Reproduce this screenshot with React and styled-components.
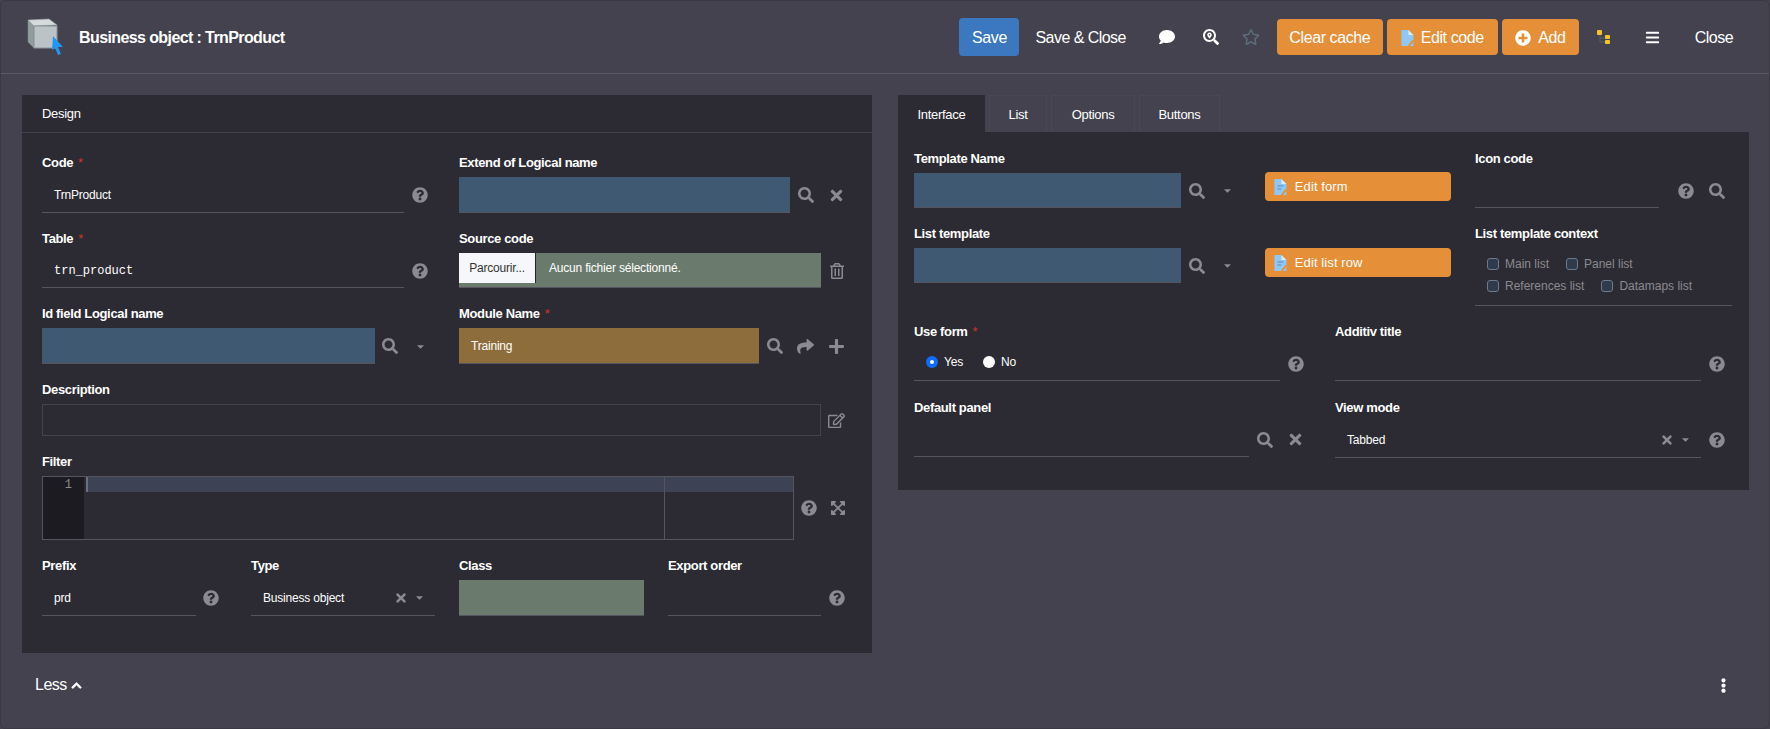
import React from 'react'
import styled, { createGlobalStyle } from 'styled-components'
import {
  FaSearch, FaTimes, FaQuestionCircle, FaRegTrashAlt, FaShare, FaPlus, FaRegEdit,
  FaExpandArrowsAlt, FaCaretDown, FaChevronUp, FaComment, FaSearchLocation, FaRegStar,
  FaPlusCircle, FaBars, FaEllipsisV,
} from 'react-icons/fa'

const Global = createGlobalStyle`
  html, body { margin: 0; padding: 0; background: #43424e; }
  *, *::before { box-sizing: border-box; }
  body { font-family: "Liberation Sans", Arial, sans-serif; color: #fff; }
`

const Page = styled.div`
  width: 1770px;
  height: 729px;
  overflow: hidden;
  background: #43424e;
  border: 1px solid #3a3944;
  border-radius: 6px;
`

const Header = styled.header`
  height: 73px;
  display: flex;
  align-items: center;
  border-bottom: 1px solid #5a5965;
  padding: 0 36px 0 26px;
`

const Title = styled.h1`
  flex: 1;
  margin: 2px 0 0 14px;
  font-size: 16px;
  font-weight: 700;
  letter-spacing: -0.6px;
`

const Toolbar = styled.div`
  display: flex;
  align-items: center;
`

const SaveButton = styled.button`
  height: 38px;
  width: 60px;
  padding: 2px 0 0;
  border: 0;
  border-radius: 4px;
  background: #3b78c0;
  color: #fff;
  font: 16px "Liberation Sans", Arial, sans-serif;
  letter-spacing: -0.4px;
  margin-right: 16px;
`

const TextButton = styled.span`
  font-size: 16px;
  letter-spacing: -0.55px;
  padding-top: 2px;
  margin: ${p => p.$margin || '0'};
`

const ToolIcon = styled.span`
  display: flex;
  justify-content: center;
  width: ${p => p.$w || 44}px;
  margin: ${p => p.$margin || '0'};
  font-size: ${p => p.$size || 16}px;
  color: ${p => p.$color || '#fff'};
`

const OrangeButton = styled.button`
  display: flex;
  align-items: center;
  justify-content: ${p => (p.$wide ? 'flex-start' : 'center')};
  gap: ${p => (p.$wide ? 8 : 7)}px;
  width: ${p => p.$w}px;
  height: ${p => (p.$wide ? 29 : 36)}px;
  margin: ${p => p.$margin || '0'};
  padding: ${p => (p.$wide ? '0 0 0 9px' : '2px 0 0')};
  border: 0;
  border-radius: 4px;
  background: #e59038;
  color: #fff;
  font: ${p => (p.$wide ? 13 : 16)}px "Liberation Sans", Arial, sans-serif;
  letter-spacing: ${p => (p.$wide ? '0.1px' : '-0.4px')};
`

const Main = styled.main`
  display: flex;
  align-items: flex-start;
  gap: 26px;
  padding: 21px 0 0 21px;
`

const Panel = styled.section`
  width: 850px;
  height: 558px;
  background: #2c2b33;
`

const PanelHead = styled.div`
  height: 38px;
  display: flex;
  align-items: center;
  padding-left: 20px;
  font-size: 13px;
  letter-spacing: -0.3px;
  border-bottom: 1px solid #42414c;
`

const Field = styled.div`
  min-width: 0;
  width: ${p => (p.$w ? `${p.$w}px` : 'auto')};
`

const Label = styled.label`
  display: block;
  height: 16px;
  line-height: 16px;
  margin-bottom: ${p => p.$gap ?? 7}px;
  font-size: 13px;
  font-weight: 700;
  letter-spacing: -0.35px;
  white-space: nowrap;

  em {
    margin-left: 5px;
    color: #d0342c;
    font-style: normal;
    font-weight: 400;
  }
`

const PanelBody = styled.div`
  display: flex;
  flex-direction: column;
  gap: 17px;
  padding: 21px 20px 0;

  ${Label} { line-height: 18px; }
`

const TwoCols = styled.div`
  display: grid;
  grid-template-columns: 393px 393px;
  column-gap: 24px;
`

const BottomRow = styled.div`
  display: grid;
  grid-template-columns: 209px 208px 209px 185px;
`

const Control = styled.div`
  display: flex;
  align-items: center;
  height: ${p => p.$h || 36}px;
`

const Input = styled.div`
  flex: 1;
  min-width: 0;
  align-self: stretch;
  display: flex;
  align-items: center;
  margin-right: ${p => p.$mr || 0}px;
  padding-left: ${p => p.$pl ?? 12}px;
  padding-top: ${p => (p.$mono ? 2 : 0)}px;
  font-family: ${p => (p.$mono ? '"Liberation Mono", monospace' : 'inherit')};
  font-size: 12px;
  letter-spacing: ${p => (p.$mono ? '0' : '-0.2px')};
  background: ${p => p.$bg || 'transparent'};
  border-bottom: 1px solid #55545f;
`

const Slot = styled.span`
  flex: none;
  width: ${p => p.$w || 31}px;
  display: flex;
  justify-content: center;
  align-items: center;
  font-size: ${p => p.$size || 16}px;
  color: #8b8a90;
`

const Caret = styled.span`
  display: flex;
  font-size: 11px;
  color: #8b8a90;
  margin: 0 ${p => p.$mr || 0}px 0 6px;
`

const ClearMark = styled.span`
  display: flex;
  font-size: 14px;
  color: #8b8a90;
`

const SelectValue = styled.span`
  flex: 1;
`

const FileButton = styled.span`
  align-self: flex-start;
  width: 77px;
  height: 30px;
  display: flex;
  align-items: center;
  justify-content: center;
  border-right: 1px solid #24232a;
  background: #f6f7fa;
  color: #333;
  font-size: 12px;
`

const FileName = styled.span`
  margin: 0 0 4px 13px;
  font-size: 12px;
`

const Description = styled.div`
  flex: 1;
  align-self: stretch;
  border: 1px solid #42414c;
`

const Editor = styled.div`
  flex: 1;
  align-self: stretch;
  display: flex;
  border: 1px solid #55545f;
`

const Gutter = styled.div`
  width: 41px;
  background: #1c1b21;
  color: #8b8a90;
  font: 12px/16px "Liberation Mono", monospace;
  text-align: right;
  padding-right: 12px;
`

const EditorLines = styled.div`
  position: relative;
  flex: 1;
`

const ActiveLine = styled.div`
  height: 15px;
  background: #3d4354;
  border-left: 2px solid #6a7080;
  margin-left: 2px;
`

const PrintMargin = styled.div`
  position: absolute;
  top: 0;
  bottom: 0;
  left: 580px;
  width: 1px;
  background: #55545f;
`

const LessRow = styled.div`
  display: flex;
  align-items: center;
  justify-content: space-between;
  padding: 23px 34px 0 34px;
  font-size: 16px;
`

const Less = styled.span`
  display: flex;
  align-items: center;
  gap: 4px;
  letter-spacing: -0.5px;

  svg {
    font-size: 11px;
    stroke: currentColor;
    stroke-width: 40px;
  }
`

const Kebab = styled.span`
  display: flex;
  font-size: 15px;
  margin-right: 4px;
`

const RightColumn = styled.div`
  width: 851px;
`

const Tabs = styled.nav`
  display: flex;
  gap: 4px;
  height: 37px;
`

const Tab = styled.span`
  display: flex;
  align-items: center;
  justify-content: center;
  width: ${p => p.$w}px;
  font-size: 13px;
  letter-spacing: -0.3px;
  background: ${p => (p.$active ? '#2c2b33' : 'transparent')};
  border: 1px solid ${p => (p.$active ? '#2c2b33' : '#484753')};
  border-bottom: 0;
`

const RightPanel = styled.section`
  height: 358px;
  padding: 19px 17px 0 16px;
  background: #2c2b33;
`

const TopGrid = styled.div`
  display: grid;
  grid-template-columns: 328px 187px 257px;
  column-gap: 23px;
  row-gap: 18px;
  margin-bottom: 18px;
`

const LowerGrid = styled.div`
  display: grid;
  grid-template-columns: 397px 397px;
  column-gap: 24px;
  row-gap: 19px;
`

const Context = styled.div`
  height: 58px;
  padding: 5px 0 0 12px;
  border-bottom: 1px solid #55545f;
`

const CheckRow = styled.div`
  display: flex;
  align-items: center;
  gap: 17px;
  height: 22px;
`

const Check = styled.span`
  display: flex;
  align-items: center;
  gap: 6px;
  font-size: 12px;
  color: #8b8a90;

  &::before {
    content: "";
    width: 12px;
    height: 12px;
    border: 1px solid #6d7a8c;
    border-radius: 3px;
    background: #2f3a4d;
  }
`

const Radios = styled.div`
  display: flex;
  align-items: center;
  gap: 20px;
  height: 100%;
  padding-bottom: 2px;
  padding-left: 12px;
`

const Radio = styled.span`
  display: flex;
  align-items: center;
  gap: 6px;
  font-size: 12px;

  &::before {
    content: "";
    width: 12px;
    height: 12px;
    border-radius: 50%;
    background: #fff;
    border: ${p => (p.$on ? '4px solid #0d6efd' : '0')};
  }
`

const Help = () => <Slot><FaQuestionCircle /></Slot>
const Search = () => <Slot><FaSearch /></Slot>
const Clear = () => <Slot $size={17}><FaTimes /></Slot>
const Drop = () => <Slot $w={30}><FaCaretDown style={{ fontSize: 11 }} /></Slot>

const Logo = () => (
  <svg width="38" height="38" viewBox="0 0 38 38">
    <polygon points="1,2 7,8 7,30 1,24" fill="#8f9d9d" stroke="#7d8a8c" strokeWidth="0.6" />
    <polygon points="1,2 22,1 30,7 7,8" fill="#d5dadb" stroke="#9aa3a6" strokeWidth="0.6" />
    <rect x="7" y="8" width="23" height="22" fill="#bcc3c7" stroke="#8b9498" strokeWidth="1" />
    <polygon points="26,18 36,29 31,29 34,36 31,37 28,30 25,32" fill="#2196f3" />
  </svg>
)

const FileIcon = ({ size = 16, lines = true }) => (
  <svg width={size * 0.8} height={size} viewBox="0 0 12 16">
    <path d="M0 0h7l5 5v11H0z" fill="#8fc8f5" />
    <path d="M7 0l5 5H7z" fill="#d8ecfb" />
    {lines && <path d="M3 7h6M3 10h4" stroke="#4d90c8" strokeWidth="1" />}
    <path d="M7 15l4-5 1.5 1-4 5H7z" fill="#e8902a" />
  </svg>
)

const TreeIcon = () => (
  <svg width="16" height="16" viewBox="0 0 16 16">
    <path d="M4 6v7h5M4 9h5" stroke="#55606a" strokeWidth="1" fill="none" />
    <rect x="1" y="1" width="5" height="5" rx="1" fill="#f5c325" />
    <rect x="9" y="6" width="5" height="4" rx="1" fill="#f5c325" />
    <rect x="9" y="11" width="5" height="4" rx="1" fill="#f5c325" />
  </svg>
)

export default function App() {
  return (
    <Page>
      <Global />
      <Header>
        <Logo />
        <Title>Business object : TrnProduct</Title>
        <Toolbar>
          <SaveButton>Save</SaveButton>
          <TextButton $margin="0 19px 0 0">Save &amp; Close</TextButton>
          <ToolIcon><FaComment /></ToolIcon>
          <ToolIcon><FaSearchLocation /></ToolIcon>
          <ToolIcon $w={36} $size={18} $color="#5d6b7c"><FaRegStar /></ToolIcon>
          <OrangeButton $w={106} $margin="0 4px 0 8px">Clear cache</OrangeButton>
          <OrangeButton $w={111} $margin="0 4px 0 0"><FileIcon size={16} lines={false} />Edit code</OrangeButton>
          <OrangeButton $w={77}><FaPlusCircle />Add</OrangeButton>
          <ToolIcon $margin="0 0 0 3px"><TreeIcon /></ToolIcon>
          <ToolIcon $size={15} $margin="0 0 0 5px"><FaBars /></ToolIcon>
          <TextButton $margin="0 0 0 20px">Close</TextButton>
        </Toolbar>
      </Header>

      <Main>
        <Panel>
          <PanelHead>Design</PanelHead>
          <PanelBody>
            <TwoCols>
              <Field>
                <Label>Code<em>*</em></Label>
                <Control><Input>TrnProduct</Input><Help /></Control>
              </Field>
              <Field>
                <Label>Extend of Logical name</Label>
                <Control><Input $bg="#3f5973" /><Search /><Clear /></Control>
              </Field>
            </TwoCols>
            <TwoCols>
              <Field>
                <Label>Table<em>*</em></Label>
                <Control $h={35}><Input $mono>trn_product</Input><Help /></Control>
              </Field>
              <Field>
                <Label>Source code</Label>
                <Control $h={35}>
                  <Input $bg="#6a7b6d" $pl={0}>
                    <FileButton>Parcourir...</FileButton>
                    <FileName>Aucun fichier sélectionné.</FileName>
                  </Input>
                  <Slot><FaRegTrashAlt /></Slot>
                </Control>
              </Field>
            </TwoCols>
            <TwoCols>
              <Field>
                <Label>Id field Logical name</Label>
                <Control><Input $bg="#3f5973" /><Slot $w={30}><FaSearch /></Slot><Drop /></Control>
              </Field>
              <Field>
                <Label>Module Name<em>*</em></Label>
                <Control>
                  <Input $bg="#8c6d3b">Training</Input>
                  <Search />
                  <Slot $size={17}><FaShare /></Slot>
                  <Slot $size={17}><FaPlus /></Slot>
                </Control>
              </Field>
            </TwoCols>
            <Field>
              <Label>Description</Label>
              <Control $h={32}><Description /><Slot $size={17}><FaRegEdit /></Slot></Control>
            </Field>
            <Field>
              <Label>Filter</Label>
              <Control $h={64}>
                <Editor>
                  <Gutter>1</Gutter>
                  <EditorLines><ActiveLine /><PrintMargin /></EditorLines>
                </Editor>
                <Slot $w={29}><FaQuestionCircle /></Slot>
                <Slot $w={29}><FaExpandArrowsAlt /></Slot>
              </Control>
            </Field>
            <BottomRow>
              <Field $w={184}>
                <Label>Prefix</Label>
                <Control><Input>prd</Input><Slot $w={30}><FaQuestionCircle /></Slot></Control>
              </Field>
              <Field $w={184}>
                <Label>Type</Label>
                <Control>
                  <Input>
                    <SelectValue>Business object</SelectValue>
                    <ClearMark><FaTimes /></ClearMark>
                    <Caret $mr={10}><FaCaretDown /></Caret>
                  </Input>
                </Control>
              </Field>
              <Field $w={185}>
                <Label>Class</Label>
                <Control><Input $bg="#6a7b6d" /></Control>
              </Field>
              <Field $w={184}>
                <Label>Export order</Label>
                <Control><Input /><Help /></Control>
              </Field>
            </BottomRow>
          </PanelBody>
        </Panel>

        <RightColumn>
          <Tabs>
            <Tab $w={87} $active>Interface</Tab>
            <Tab $w={58}>List</Tab>
            <Tab $w={84}>Options</Tab>
            <Tab $w={81}>Buttons</Tab>
          </Tabs>
          <RightPanel>
            <TopGrid>
              <Field>
                <Label $gap={6}>Template Name</Label>
                <Control $h={35}><Input $bg="#3f5973" /><Search /><Drop /></Control>
              </Field>
              <OrangeButton $wide $w={186} $margin="21px 0 0"><FileIcon />Edit form</OrangeButton>
              <Field>
                <Label $gap={6}>Icon code</Label>
                <Control $h={35}><Input $mr={11} /><Help /><Search /></Control>
              </Field>
              <Field>
                <Label $gap={6}>List template</Label>
                <Control $h={35}><Input $bg="#3f5973" /><Search /><Drop /></Control>
              </Field>
              <OrangeButton $wide $w={186} $margin="22px 0 0"><FileIcon />Edit list row</OrangeButton>
              <Field>
                <Label $gap={6}>List template context</Label>
                <Context>
                  <CheckRow><Check>Main list</Check><Check>Panel list</Check></CheckRow>
                  <CheckRow><Check>References list</Check><Check>Datamaps list</Check></CheckRow>
                </Context>
              </Field>
            </TopGrid>
            <LowerGrid>
              <Field>
                <Label $gap={6}>Use form<em>*</em></Label>
                <Control $h={35}>
                  <Input $pl={0}>
                    <Radios><Radio $on>Yes</Radio><Radio>No</Radio></Radios>
                  </Input>
                  <Help />
                </Control>
              </Field>
              <Field>
                <Label $gap={6}>Additiv title</Label>
                <Control $h={35}><Input /><Help /></Control>
              </Field>
              <Field>
                <Label $gap={6}>Default panel</Label>
                <Control $h={35}><Input /><Search /><Clear /></Control>
              </Field>
              <Field>
                <Label $gap={6}>View mode</Label>
                <Control $h={36}>
                  <Input>
                    <SelectValue>Tabbed</SelectValue>
                    <ClearMark><FaTimes /></ClearMark>
                    <Caret $mr={10}><FaCaretDown /></Caret>
                  </Input>
                  <Help />
                </Control>
              </Field>
            </LowerGrid>
          </RightPanel>
        </RightColumn>
      </Main>

      <LessRow>
        <Less>Less <FaChevronUp /></Less>
        <Kebab><FaEllipsisV /></Kebab>
      </LessRow>
    </Page>
  )
}
